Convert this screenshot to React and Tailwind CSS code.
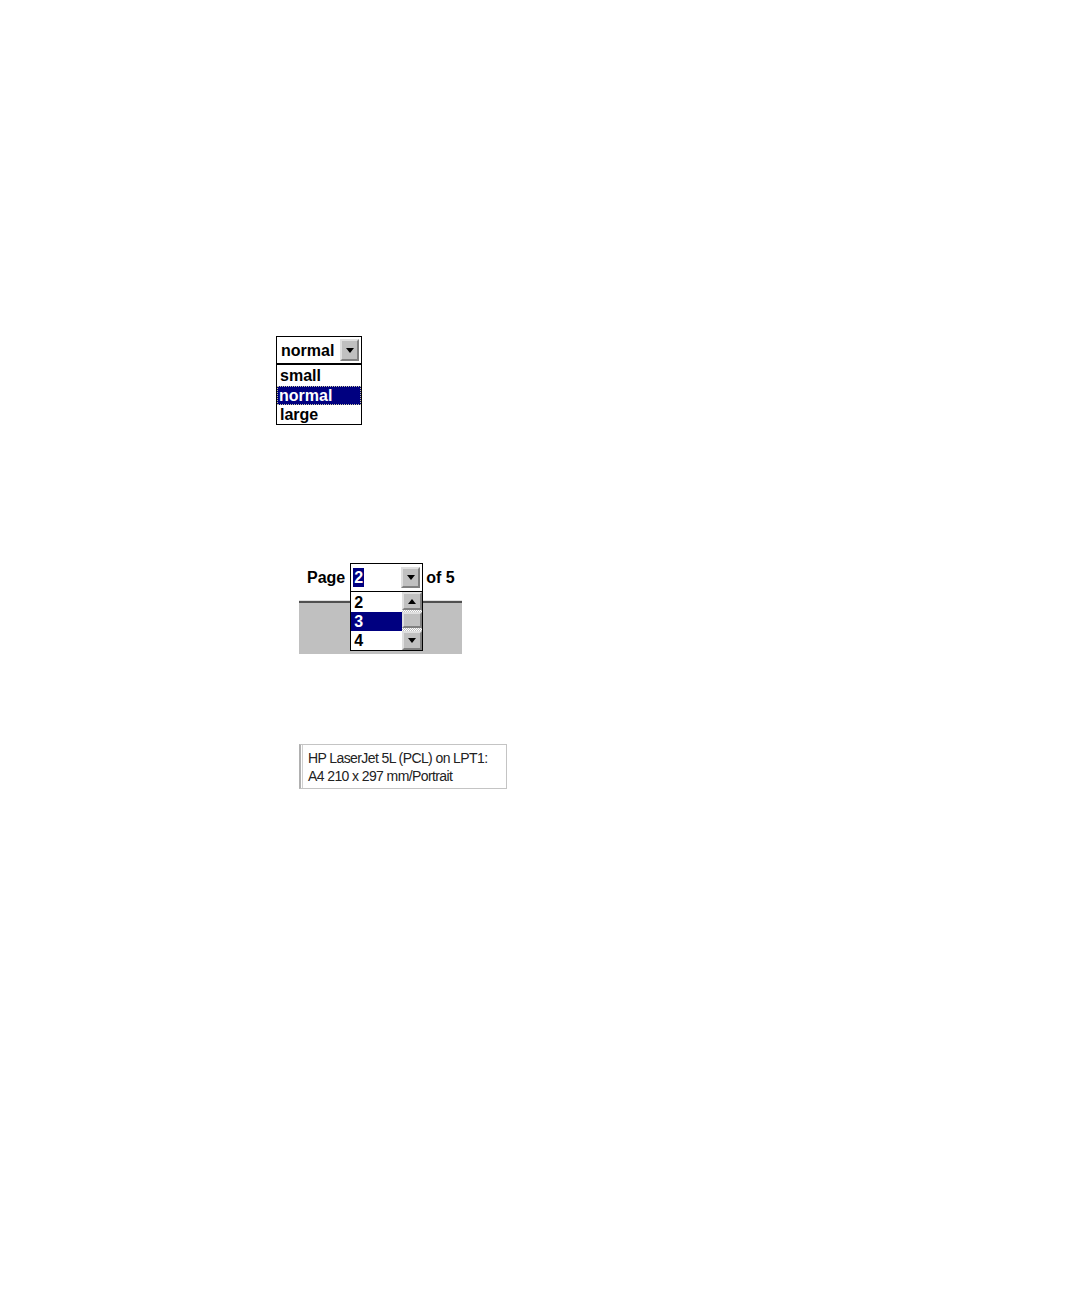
import React from 'react';

const font = { fontFamily: '"Liberation Sans", Arial, sans-serif' };

function ArrowButton({ up = false, className = '' }) {
  return (
    <div
      className={`flex items-center justify-center bg-[#c0c0c0] border-t-2 border-l-2 border-t-[#dfdfdf] border-l-[#dfdfdf] border-b-2 border-r-2 border-b-[#808080] border-r-[#808080] ${className}`}
    >
      <svg width="8" height="5" viewBox="0 0 8 5">
        {up ? <path d="M0 5 L4 0 L8 5 Z" fill="#000" /> : <path d="M0 0 L8 0 L4 5 Z" fill="#000" />}
      </svg>
    </div>
  );
}

function SizeCombo() {
  const items = ['small', 'normal', 'large'];
  return (
    <div className="w-[86px] text-[16px] font-bold text-black" style={font}>
      <div className="h-[28px] border border-black flex items-center justify-between pl-[4px] pr-[2px]">
        <span className="leading-none pt-[2px]">normal</span>
        <ArrowButton className="w-[19px] h-[22px]" />
      </div>
      <div className="h-[61px] border border-black pt-px">
        {items.map((it) => (
          <div
            key={it}
            className={
              it === 'normal'
                ? 'h-[19px] leading-[19px] pl-[2px] bg-[#000080] text-white outline-1 outline-dotted outline-[#c8c8a0] -outline-offset-1'
                : 'h-[20px] leading-[20px] pl-[3px]'
            }
          >
            {it}
          </div>
        ))}
      </div>
    </div>
  );
}

function PageCombo() {
  const items = ['2', '3', '4'];
  return (
    <div className="w-[163px]" style={font}>
      <div className="flex items-center h-[29px] pl-[8px] text-[16px] font-bold text-black">
        <span className="mr-[5px]">Page</span>
        <div className="relative">
          <div className="w-[73px] h-[29px] border border-black bg-white flex items-center justify-between pl-[2px] pr-[2px]">
            <span className="h-[19px] w-[11px] bg-[#000080] text-white leading-[19px] text-center">2</span>
            <ArrowButton className="w-[19px] h-[21px]" />
          </div>
          <div className="absolute left-0 top-[28px] z-10 w-[73px] h-[60px] border border-black bg-white flex">
            <div className="flex-1 pt-px">
              {items.map((it) => (
                <div
                  key={it}
                  className={
                    it === '3'
                      ? 'h-[19px] leading-[19px] pl-[3px] bg-[#000080] text-white'
                      : 'h-[19px] leading-[19px] pl-[3px]'
                  }
                >
                  {it}
                </div>
              ))}
            </div>
            <div className="w-[20px] flex flex-col bg-[repeating-conic-gradient(#c0c0c0_0_25%,#ffffff_0_50%)] bg-[length:2px_2px]">
              <ArrowButton up className="h-[18px] w-[20px]" />
              <div className="mt-[2px] h-[16px] bg-[#c0c0c0] border-t-2 border-l-2 border-t-[#dfdfdf] border-l-[#dfdfdf] border-b-2 border-r-2 border-b-[#808080] border-r-[#808080]" />
              <div className="flex-1" />
              <ArrowButton className="h-[19px] w-[20px]" />
            </div>
          </div>
        </div>
        <span className="ml-[3px]">of 5</span>
      </div>
      <div className="mt-[8px] h-[54px] bg-[#c0c0c0] border-t border-t-[#e0e0e0]">
        <div className="h-[2px] bg-[#505050]" />
      </div>
    </div>
  );
}

function PrinterStatus() {
  return (
    <div
      className="w-[208px] h-[45px] border border-[#c4c4c4] border-l-[2px] border-l-[#b0b0b0] bg-white"
      style={font}
    >
      <div className="h-full ml-px border-l border-l-[#d0d0d0] pl-[5px] pt-[4px] text-[14px] leading-[18px] tracking-[-0.6px] text-[#222]">
        <div>HP LaserJet 5L (PCL) on LPT1:</div>
        <div>A4 210 x 297 mm/Portrait</div>
      </div>
    </div>
  );
}

export default function App() {
  return (
    <div className="w-[1080px] min-h-[1296px] bg-white">
      <div className="pt-[336px] pl-[276px]">
        <SizeCombo />
      </div>
      <div className="mt-[138px] pl-[299px]">
        <PageCombo />
      </div>
      <div className="mt-[90px] pl-[299px]">
        <PrinterStatus />
      </div>
    </div>
  );
}
